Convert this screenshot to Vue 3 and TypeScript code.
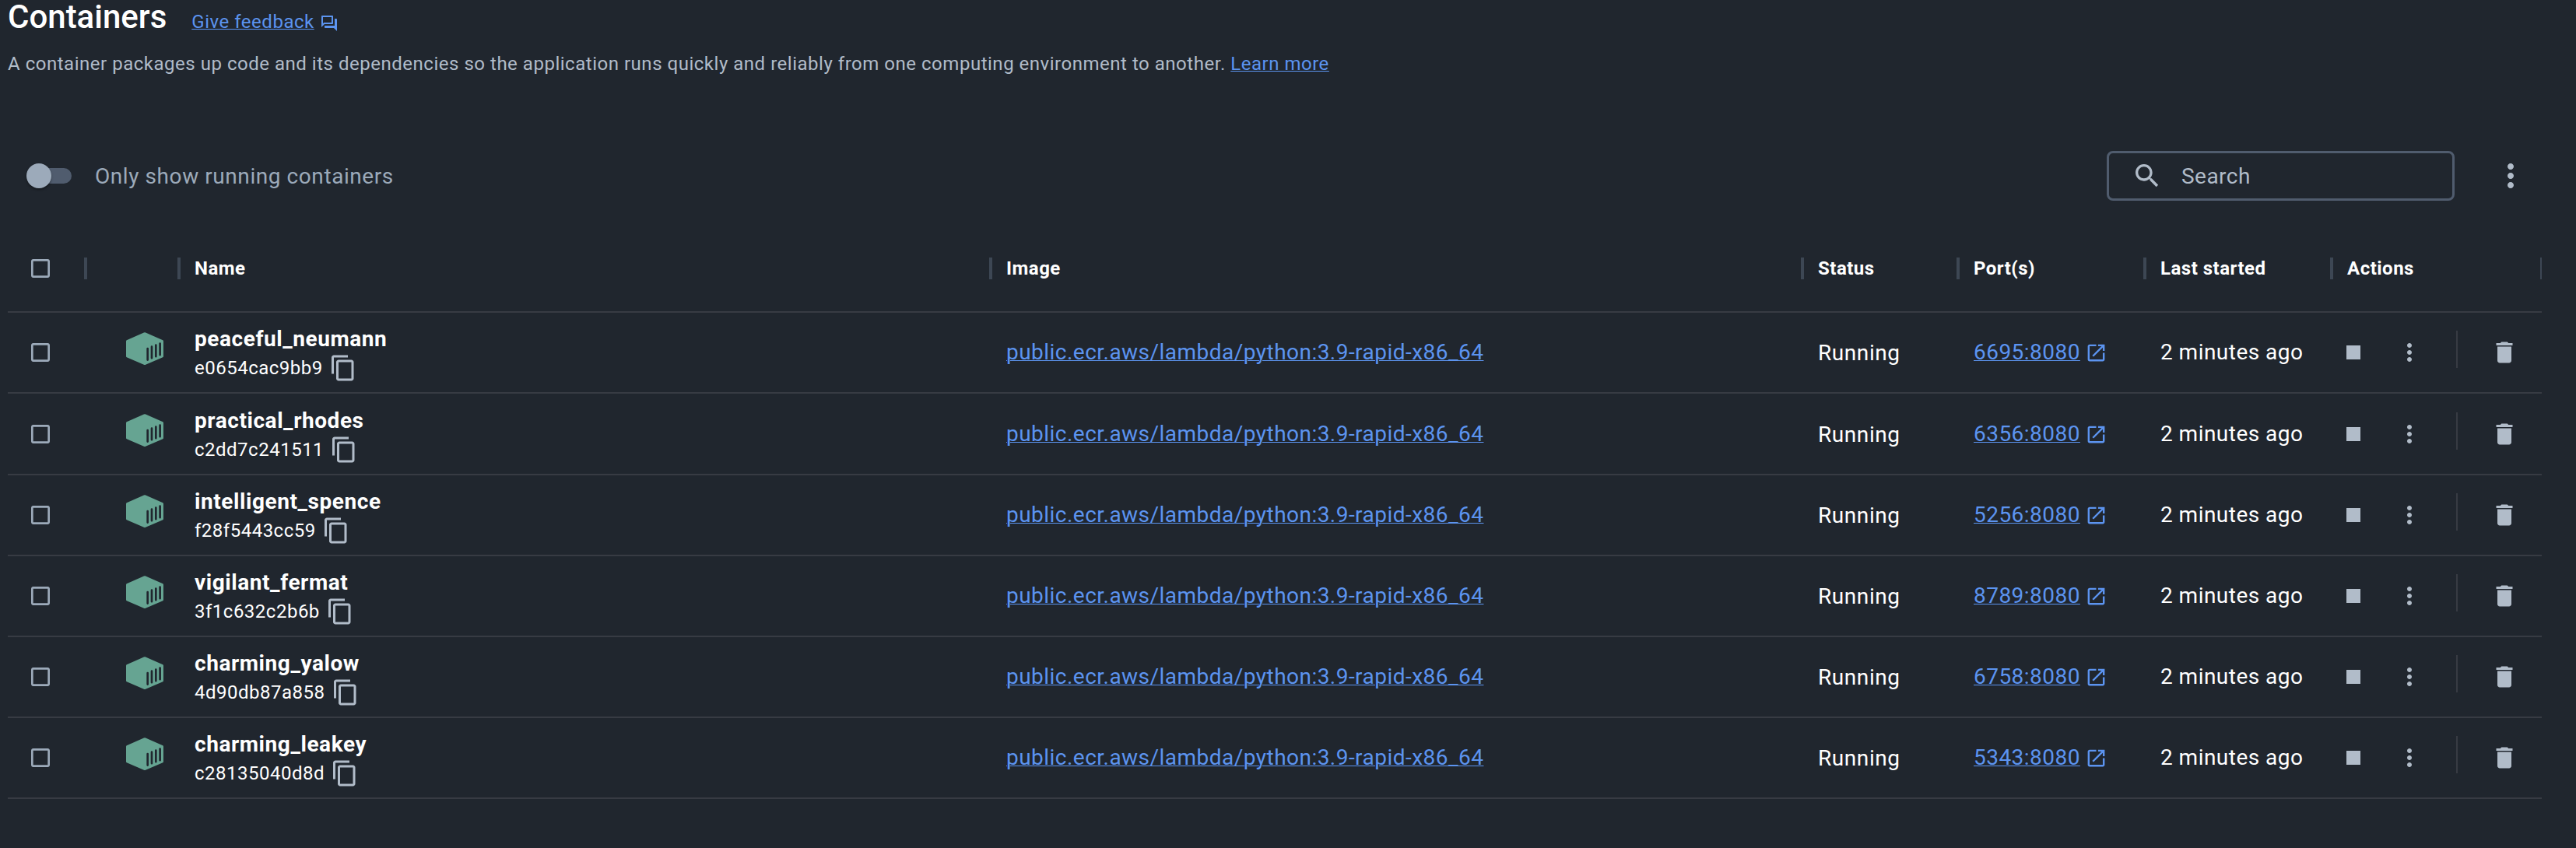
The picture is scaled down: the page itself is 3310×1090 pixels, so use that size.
<script setup lang="ts">
interface Container {
  name: string
  id: string
  port: string
}

const image = 'public.ecr.aws/lambda/python:3.9-rapid-x86_64'

const containers: Container[] = [
  { name: 'peaceful_neumann', id: 'e0654cac9bb9', port: '6695:8080' },
  { name: 'practical_rhodes', id: 'c2dd7c241511', port: '6356:8080' },
  { name: 'intelligent_spence', id: 'f28f5443cc59', port: '5256:8080' },
  { name: 'vigilant_fermat', id: '3f1c632c2b6b', port: '8789:8080' },
  { name: 'charming_yalow', id: '4d90db87a858', port: '6758:8080' },
  { name: 'charming_leakey', id: 'c28135040d8d', port: '5343:8080' },
]

const columns = [
  { key: 'icon', label: '' },
  { key: 'name', label: 'Name' },
  { key: 'image', label: 'Image' },
  { key: 'status', label: 'Status' },
  { key: 'ports', label: 'Port(s)' },
  { key: 'started', label: 'Last started' },
  { key: 'actions', label: 'Actions' },
]
</script>

<template>
  <main class="page">
    <header class="title-row">
      <h1>Containers</h1>
      <div class="feedback">
        <a class="link">Give feedback</a>
        <svg class="feedback-icon" viewBox="0 0 24 24">
          <path d="M15 4v7H5.17L4 12.17V4h11m1-2H3c-.55 0-1 .45-1 1v14l4-4h10c.55 0 1-.45 1-1V3c0-.55-.45-1-1-1zm5 4h-2v9H6v2c0 .55.45 1 1 1h11l4 4V7c0-.55-.45-1-1-1z" />
        </svg>
      </div>
    </header>
    <p class="description">
      A container packages up code and its dependencies so the application runs quickly and reliably from one computing environment to another. <a class="link">Learn more</a>
    </p>

    <div class="toolbar">
      <div class="switch"><span class="thumb"></span></div>
      <span class="switch-label">Only show running containers</span>
      <div class="search">
        <svg class="search-icon" viewBox="0 0 24 24">
          <path d="M15.5 14h-.79l-.28-.27C15.41 12.59 16 11.11 16 9.5 16 5.91 13.09 3 9.5 3S3 5.91 3 9.5 5.91 16 9.5 16c1.61 0 3.09-.59 4.23-1.57l.27.28v.79l5 4.99L20.49 19l-4.99-5zm-6 0C7.01 14 5 11.99 5 9.5S7.01 5 9.5 5 14 7.01 14 9.5 11.99 14 9.5 14z" />
        </svg>
        <span>Search</span>
      </div>
      <svg class="menu-icon" viewBox="0 0 24 24">
        <path d="M12 8c1.1 0 2-.9 2-2s-.9-2-2-2-2 .9-2 2 .9 2 2 2zm0 2c-1.1 0-2 .9-2 2s.9 2 2 2 2-.9 2-2-.9-2-2-2zm0 6c-1.1 0-2 .9-2 2s.9 2 2 2 2-.9 2-2-.9-2-2-2z" />
      </svg>
    </div>

    <section class="table">
      <div class="row head">
        <div class="cell check">
          <svg class="checkbox" viewBox="0 0 24 24">
            <path d="M19 5v14H5V5h14m0-2H5c-1.1 0-2 .9-2 2v14c0 1.1.9 2 2 2h14c1.1 0 2-.9 2-2V5c0-1.1-.9-2-2-2z" />
          </svg>
          <i class="separator"></i>
        </div>
        <div v-for="col in columns" :key="col.key" class="cell" :class="col.key">
          <span>{{ col.label }}</span>
          <i class="separator"></i>
        </div>
      </div>

      <div v-for="c in containers" :key="c.id" class="row body">
        <div class="cell check">
          <svg class="checkbox" viewBox="0 0 24 24">
            <path d="M19 5v14H5V5h14m0-2H5c-1.1 0-2 .9-2 2v14c0 1.1.9 2 2 2h14c1.1 0 2-.9 2-2V5c0-1.1-.9-2-2-2z" />
          </svg>
        </div>
        <div class="cell icon">
          <svg class="cube" viewBox="0 0 48 42">
            <path fill="#66a492" d="M22.9.4Q24 0 25.1.4L47.2 10.2Q48 10.6 48 11.5V30.9Q48 31.8 47.2 32.2L25.1 41.8Q24 42.2 22.9 41.8L.8 32.2Q0 31.8 0 30.9V11.5Q0 10.6.8 10.2Z" />
            <path stroke="#20262e" stroke-width="2.7" stroke-linecap="round" d="M27.7 21V35.6M33 18.7V33.2M38.3 16.6V31.2M43.6 14.6V29.2" />
          </svg>
        </div>
        <div class="cell name">
          <div class="name-stack">
            <strong>{{ c.name }}</strong>
            <div class="id-line">
              <span>{{ c.id }}</span>
              <svg class="copy-icon" viewBox="0 0 24 24">
                <path d="M16 1H4c-1.1 0-2 .9-2 2v14h2V3h12V1zm3 4H8c-1.1 0-2 .9-2 2v14c0 1.1.9 2 2 2h11c1.1 0 2-.9 2-2V7c0-1.1-.9-2-2-2zm0 16H8V7h11v14z" />
              </svg>
            </div>
          </div>
        </div>
        <div class="cell image"><a class="link">{{ image }}</a></div>
        <div class="cell status"><span>Running</span></div>
        <div class="cell ports">
          <a class="link">{{ c.port }}</a>
          <svg class="open-icon" viewBox="0 0 24 24">
            <path d="M19 19H5V5h7V3H5c-1.11 0-2 .9-2 2v14c0 1.1.89 2 2 2h14c1.1 0 2-.9 2-2v-7h-2v7zM14 3v2h3.59l-9.83 9.83 1.41 1.41L19 6.41V10h2V3h-7z" />
          </svg>
        </div>
        <div class="cell started"><span>2 minutes ago</span></div>
        <div class="cell actions">
          <svg class="action" viewBox="0 0 24 24"><path d="M6 6h12v12H6z" /></svg>
          <svg class="action more" viewBox="0 0 24 24">
            <path d="M12 8c1.1 0 2-.9 2-2s-.9-2-2-2-2 .9-2 2 .9 2 2 2zm0 2c-1.1 0-2 .9-2 2s.9 2 2 2 2-.9 2-2-.9-2-2-2zm0 6c-1.1 0-2 .9-2 2s.9 2 2 2 2-.9 2-2-.9-2-2-2z" />
          </svg>
          <i class="divider"></i>
          <svg class="action" viewBox="0 0 24 24">
            <path d="M6 19c0 1.1.9 2 2 2h8c1.1 0 2-.9 2-2V7H6v12zM19 4h-3.5l-1-1h-5l-1 1H5v2h14V4z" />
          </svg>
        </div>
      </div>
    </section>
  </main>
</template>

<style>
body {
  background: #20262e;
}
</style>

<style scoped>
.page {
  box-sizing: border-box;
  width: 3310px;
  height: 1090px;
  padding: 0 44px 0 10px;
  overflow: hidden;
  background: #20262e;
  color: #fff;
  font-family: Roboto, sans-serif;
  font-size: 28px;
  letter-spacing: 0.47px;
}
svg {
  display: block;
  flex: none;
  fill: #b1bcc9;
}
.link {
  color: #5c94f0;
  text-decoration: underline;
  text-decoration-thickness: 1px;
  text-underline-offset: 1px;
}
.title-row {
  display: flex;
  align-items: flex-start;
  gap: 32px;
  height: 66px;
}
h1 {
  margin: 0;
  font-size: 42px;
  font-weight: 500;
  line-height: 44px;
  letter-spacing: 0;
}
.feedback {
  display: flex;
  gap: 7px;
  padding-top: 16px;
  font-size: 24px;
  line-height: 24px;
  letter-spacing: 0.52px;
}
.feedback-icon {
  width: 24px;
  height: 24px;
  margin-top: 2px;
  fill: #5c94f0;
}
.description {
  margin: 0 0 96px;
  color: #b1bcc9;
  font-size: 24px;
  line-height: 32px;
  letter-spacing: 0.52px;
}
.toolbar {
  display: flex;
  align-items: center;
  height: 64px;
  margin-bottom: 32px;
}
.switch {
  display: flex;
  align-items: center;
  width: 56px;
  height: 20px;
  margin-left: 26px;
  border-radius: 10px;
  background: #505c6e;
}
.thumb {
  width: 32px;
  height: 32px;
  margin-left: -2px;
  border-radius: 50%;
  background: #9caaba;
  box-shadow: 0 2px 3px rgba(0, 0, 0, 0.35);
}
.switch-label {
  margin-left: 30px;
  color: #9caaba;
  letter-spacing: 0.57px;
}
.search {
  display: flex;
  align-items: center;
  gap: 24px;
  box-sizing: border-box;
  width: 447px;
  height: 64px;
  margin-left: auto;
  padding-left: 29px;
  border: 3px solid #505c6e;
  border-radius: 8px;
  color: #b1bcc9;
}
.search-icon {
  width: 40px;
  height: 40px;
}
.menu-icon {
  width: 48px;
  height: 48px;
  margin: 0 16px 0 48px;
}
.table {
  width: 3256px;
  overflow: hidden;
}
.row {
  display: flex;
  box-sizing: border-box;
  height: 104px;
  border-bottom: 2px solid #373b43;
}
.row.head {
  height: 112px;
  font-size: 24px;
  font-weight: 700;
  letter-spacing: 0.5px;
}
.row.body:nth-child(3) {
  height: 105px;
  padding-top: 1px;
}
.cell {
  display: flex;
  align-items: center;
  box-sizing: border-box;
  padding-left: 20px;
}
.check {
  width: 100px;
  padding-left: 26px;
}
.icon {
  width: 120px;
  padding-left: 52px;
}
.name,
.image {
  width: 1043px;
}
.status {
  width: 200px;
}
.ports,
.started {
  width: 240px;
}
.actions {
  width: 270px;
}
.separator {
  width: 4px;
  height: 28px;
  margin-left: auto;
  margin-right: -2px;
  background: #3d4754;
}
.checkbox {
  width: 32px;
  height: 32px;
  fill: #9caaba;
}
.cube {
  width: 48px;
  height: 42px;
  margin-bottom: 10px;
}
.name-stack strong {
  display: block;
  box-sizing: border-box;
  height: 40px;
  padding-top: 1px;
  font-weight: 700;
  line-height: 40px;
  letter-spacing: 0.57px;
}
.id-line {
  display: flex;
  align-items: center;
  gap: 8px;
  height: 36px;
  font-size: 24px;
  letter-spacing: 0.5px;
}
.copy-icon {
  width: 36px;
  height: 36px;
}
.body .status {
  letter-spacing: 0.57px;
}
.body .cell > .link,
.body .started span {
  padding-bottom: 2px;
}
.open-icon {
  width: 29px;
  height: 29px;
  margin-left: 6px;
  fill: #5c94f0;
}
.body .actions {
  padding-left: 10px;
}
.action {
  width: 36px;
  height: 36px;
}
.more {
  margin-left: 36px;
}
.divider {
  width: 2px;
  height: 48px;
  margin: 0 42px 8px;
  background: #373b43;
}
</style>
